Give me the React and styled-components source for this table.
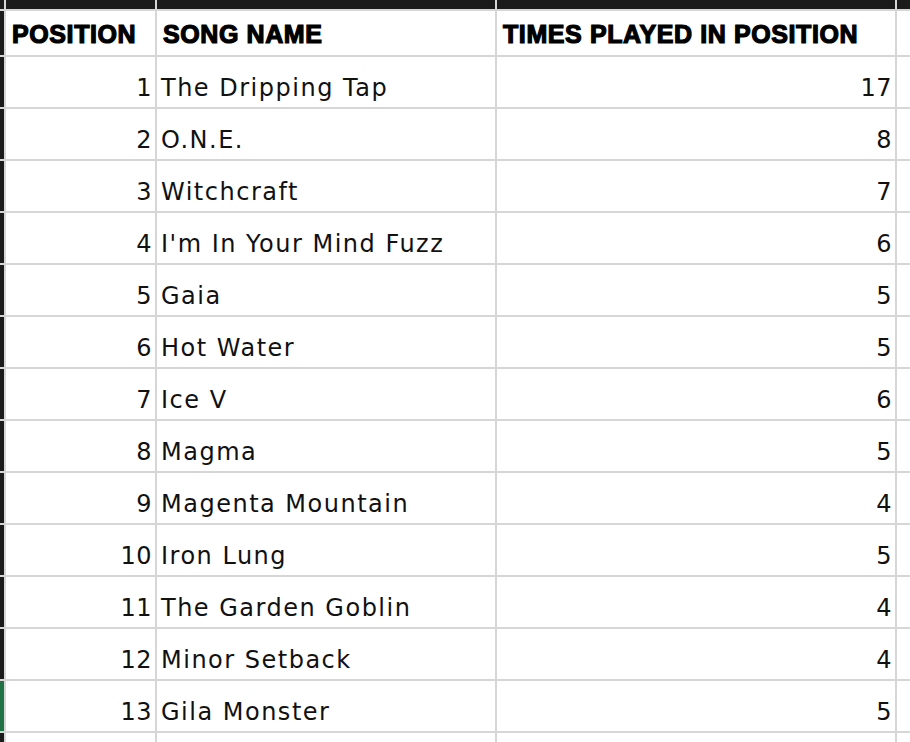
import React from 'react';
import styled, { createGlobalStyle } from 'styled-components';

const GlobalStyle = createGlobalStyle`
  html, body {
    margin: 0;
    padding: 0;
    background: #ffffff;
    overflow: hidden;
  }
`;

const rows = [
  [1, 'The Dripping Tap', 17],
  [2, 'O.N.E.', 8],
  [3, 'Witchcraft', 7],
  [4, "I'm In Your Mind Fuzz", 6],
  [5, 'Gaia', 5],
  [6, 'Hot Water', 5],
  [7, 'Ice V', 6],
  [8, 'Magma', 5],
  [9, 'Magenta Mountain', 4],
  [10, 'Iron Lung', 5],
  [11, 'The Garden Goblin', 4],
  [12, 'Minor Setback', 4],
  [13, 'Gila Monster', 5],
];

const Sheet = styled.div`
  display: grid;
  grid-template-columns: 4px 149px 338px 398px 15px;
  grid-auto-rows: 50px;
  grid-template-rows: 9px 44px;
  gap: 2px;
  background: #d6d6d6;
  width: 910px;
  height: 742px;
  overflow: hidden;
`;

const TopCell = styled.div`
  background: #1b1b1b;
`;

const Gutter = styled.div`
  background: ${(p) => (p.$active ? '#217346' : '#1b1b1b')};
`;

const Cell = styled.div`
  background: #ffffff;
  display: flex;
  align-items: flex-end;
  justify-content: ${(p) => (p.$right ? 'flex-end' : 'flex-start')};
  padding: 0 3px 5px 4px;
  font-family: 'DejaVu Sans', Verdana, sans-serif;
  font-size: 24px;
  letter-spacing: ${(p) => (p.$right ? '0.5px' : '1.5px')};
  color: #111111;
  white-space: nowrap;
  overflow: hidden;
`;

const HeadCell = styled(Cell)`
  align-items: center;
  font-family: 'Liberation Sans', Arial, sans-serif;
  font-weight: 700;
  font-size: 25px;
  letter-spacing: 0.6px;
  -webkit-text-stroke: 1.2px #000;
  color: #000;
  padding: 2px 6px 0 6px;
`;

const App = () => (
  <>
    <GlobalStyle />
    <Sheet>
      {[0, 1, 2, 3, 4].map((i) => (
        <TopCell key={i} />
      ))}
      <Gutter />
      <HeadCell>POSITION</HeadCell>
      <HeadCell>SONG NAME</HeadCell>
      <HeadCell>TIMES PLAYED IN POSITION</HeadCell>
      <Cell />
      {rows.map(([pos, name, times]) => (
        <React.Fragment key={pos}>
          <Gutter $active={pos === 13} />
          <Cell $right>{pos}</Cell>
          <Cell>{name}</Cell>
          <Cell $right>{times}</Cell>
          <Cell />
        </React.Fragment>
      ))}
      <Gutter />
      <Cell />
      <Cell />
      <Cell />
      <Cell />
    </Sheet>
  </>
);

export default App;
